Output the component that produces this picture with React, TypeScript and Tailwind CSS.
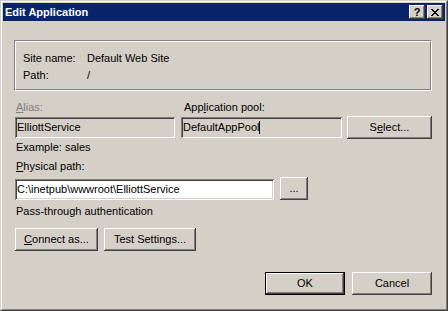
import React from 'react';

const raised =
  'bg-[#d4d0c8] shadow-[inset_-1px_-1px_0_#404040,inset_1px_1px_0_#ffffff,inset_-2px_-2px_0_#808080,inset_2px_2px_0_#d4d0c8]';
const sunken =
  'shadow-[inset_1px_1px_0_#808080,inset_-1px_-1px_0_#ffffff,inset_2px_2px_0_#404040,inset_-2px_-2px_0_#d4d0c8]';

function Button({ children, className = '', isDefault = false }: { children: React.ReactNode; className?: string; isDefault?: boolean }) {
  const frame = isDefault
    ? 'bg-[#d4d0c8] shadow-[inset_0_0_0_1px_#000000,inset_-2px_-2px_0_#404040,inset_2px_2px_0_#ffffff,inset_-3px_-3px_0_#808080]'
    : raised;
  return (
    <div className={`h-[23px] flex items-center justify-center text-black ${frame} ${className}`}>
      {children}
    </div>
  );
}

function TextBox({ children, className = '', white = false }: { children?: React.ReactNode; className?: string; white?: boolean }) {
  return (
    <div className={`h-[21px] flex items-center pl-[2px] ${white ? 'bg-white' : 'bg-[#d4d0c8]'} ${sunken} ${className}`}>
      {children}
    </div>
  );
}

const closePixels = [
  [0, 0], [1, 0], [6, 0], [7, 0],
  [1, 1], [2, 1], [5, 1], [6, 1],
  [2, 2], [3, 2], [4, 2], [5, 2],
  [3, 3], [4, 3],
  [2, 4], [3, 4], [4, 4], [5, 4],
  [1, 5], [2, 5], [5, 5], [6, 5],
  [0, 6], [1, 6], [6, 6], [7, 6],
];

export default function App() {
  return (
    <div className="w-[448px] h-[311px] border border-t-[#d4d0c8] border-l-[#d4d0c8] border-r-[#404040] border-b-[#404040] font-['Liberation_Sans',Arial,sans-serif] text-[11px] leading-[13px] text-black">
      <div className="h-full border border-t-white border-l-white border-r-[#808080] border-b-[#808080] bg-[#d4d0c8] p-px flex flex-col">
        {/* Title bar */}
        <div className="h-[18px] bg-[#0a246a] flex items-center pl-[2px] pr-[2px]">
          <span className="text-white font-bold text-[11px]">Edit Application</span>
          <div className="ml-auto flex gap-[2px]">
            <div className={`w-[16px] h-[14px] flex items-center justify-center font-bold text-[11px] leading-none ${raised}`}>?</div>
            <div className={`w-[16px] h-[14px] flex items-center justify-center ${raised}`}>
              <svg width="8" height="7" viewBox="0 0 8 7" shapeRendering="crispEdges">
                {closePixels.map(([x, y], i) => (
                  <rect key={i} x={x} y={y} width="1" height="1" fill="#000" />
                ))}
              </svg>
            </div>
          </div>
        </div>

        <div className="flex flex-col flex-1 pl-[11px] pr-[13px]">
          {/* Site info group */}
          <div className="mt-[19px] h-[51px] border border-t-[#808080] border-l-[#808080] border-r-white border-b-white">
            <div className="h-full border border-t-white border-l-white border-r-[#808080] border-b-[#808080] pl-[7px] pt-[10px] flex flex-col gap-[4px]">
              <div className="flex">
                <span className="w-[64px]">Site name:</span>
                <span>Default Web Site</span>
              </div>
              <div className="flex">
                <span className="w-[64px]">Path:</span>
                <span>/</span>
              </div>
            </div>
          </div>

          {/* Alias / pool labels */}
          <div className="mt-[10px] flex">
            <span className="w-[167px] pl-[2px] text-[#808080]"><u>A</u>lias:</span>
            <span className="pl-[3px]">App<u>l</u>ication pool:</span>
          </div>
          <div className="mt-[2px] flex items-center">
            <TextBox className="ml-px w-[160px]">ElliottService</TextBox>
            <TextBox className="ml-[6px] w-[161px]">
              DefaultAppPool<span className="w-px h-[13px] bg-black" />
            </TextBox>
            <Button className="ml-[5px] w-[85px]">S<u>e</u>lect...</Button>
          </div>

          <span className="mt-[2px] pl-[2px]">Example: sales</span>

          <span className="mt-[6px] pl-[2px]"><u>P</u>hysical path:</span>
          <div className="mt-[4px] flex items-end">
            <TextBox white className="ml-px w-[259px]">C:\inetpub\wwwroot\ElliottService</TextBox>
            <Button className="ml-[6px] w-[28px]">...</Button>
          </div>

          <span className="mt-[5px] pl-[2px]">Pass-through authentication</span>

          <div className="mt-[10px] flex gap-[6px] ml-px">
            <Button className="w-[83px]"><u>C</u>onnect as...</Button>
            <Button className="w-[92px]">Test Settings...</Button>
          </div>

          <div className="mt-[21px] flex justify-end gap-[7px]">
            <Button isDefault className="w-[80px]">OK</Button>
            <Button className="w-[80px]">Cancel</Button>
          </div>
        </div>
      </div>
    </div>
  );
}
